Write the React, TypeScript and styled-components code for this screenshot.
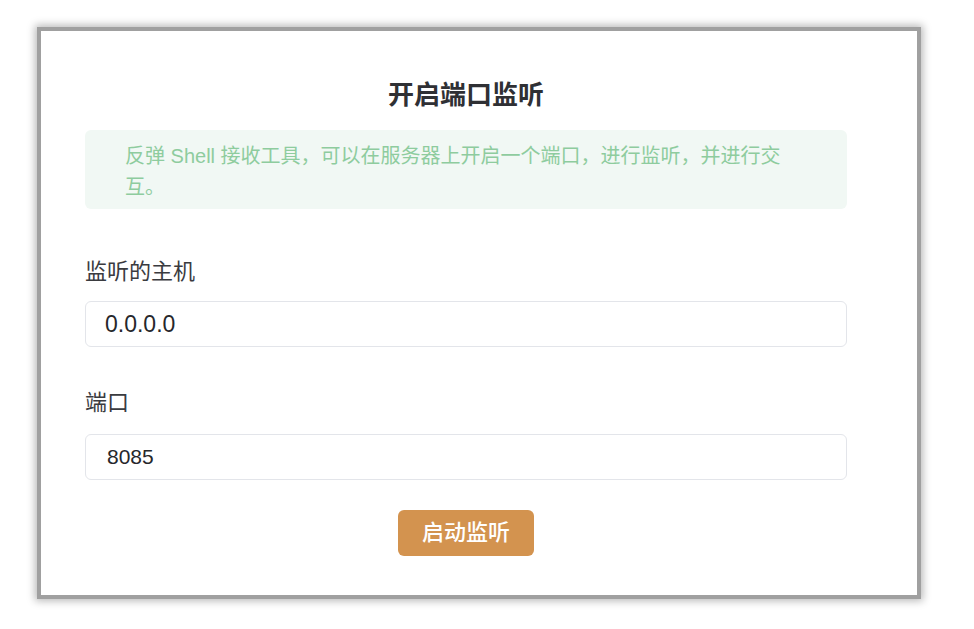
import styled, { createGlobalStyle } from "styled-components";

const GlobalStyle = createGlobalStyle`
  html, body {
    margin: 0;
    padding: 0;
    background: #ffffff;
  }
  body {
    font-family: "Liberation Sans", "Noto Sans CJK SC", sans-serif;
    color: #303133;
  }
  * {
    box-sizing: border-box;
  }
`;

const Page = styled.div`
  width: 974px;
  height: 629px;
  padding: 31px 57px 34px 41px;
`;

const Card = styled.div`
  width: 876px;
  height: 564px;
  background: #ffffff;
  display: flex;
  flex-direction: column;
  padding: 0 70px 0 44px;
  box-shadow: 0 0 0 4px #a0a0a0, 0 0 8px 6px rgba(0, 0, 0, 0.28);
`;

const Title = styled.h2`
  margin: 46px 0 0;
  font-size: 26px;
  line-height: 36px;
  font-weight: 700;
  text-align: center;
  color: #2f3034;
`;

const Alert = styled.div`
  margin-top: 17px;
  height: 79px;
  padding: 11px 50px 6px 40px;
  border-radius: 6px;
  background: #f1f8f4;
  color: #8ecc9e;
  font-size: 20px;
  line-height: 31px;
`;

const Field = styled.div<{ $top: number }>`
  display: flex;
  flex-direction: column;
  margin-top: ${(p) => p.$top}px;
`;

const Label = styled.label<{ $gap: number }>`
  font-size: 22px;
  line-height: 30px;
  color: #3a3b3f;
  margin-bottom: ${(p) => p.$gap}px;
`;

const Input = styled.input<{ $size: number; $indent: number }>`
  height: 46px;
  width: 100%;
  border: 1px solid #e3e5ea;
  border-radius: 6px;
  padding: 0 ${(p) => p.$indent}px;
  font-family: "Liberation Sans", "Noto Sans CJK SC", sans-serif;
  font-size: ${(p) => p.$size}px;
  color: #26272b;
  background: #ffffff;
  outline: none;
`;

const Button = styled.button`
  align-self: center;
  margin-top: 30px;
  width: 136px;
  height: 46px;
  border: none;
  border-radius: 6px;
  background: #d3934f;
  color: #ffffff;
  font-family: "Liberation Sans", "Noto Sans CJK SC", sans-serif;
  font-size: 22px;
  font-weight: 500;
  line-height: 46px;
  padding: 0;
  cursor: pointer;
`;

export default function App() {
  return (
    <>
      <GlobalStyle />
      <Page>
        <Card>
          <Title>开启端口监听</Title>
          <Alert>
            反弹 Shell 接收工具，可以在服务器上开启一个端口，进行监听，并进行交互。
          </Alert>
          <Field $top={48}>
            <Label $gap={14}>监听的主机</Label>
            <Input $size={23} $indent={19} defaultValue="0.0.0.0" />
          </Field>
          <Field $top={41}>
            <Label $gap={16}>端口</Label>
            <Input $size={21} $indent={21} defaultValue="8085" />
          </Field>
          <Button>启动监听</Button>
        </Card>
      </Page>
    </>
  );
}
